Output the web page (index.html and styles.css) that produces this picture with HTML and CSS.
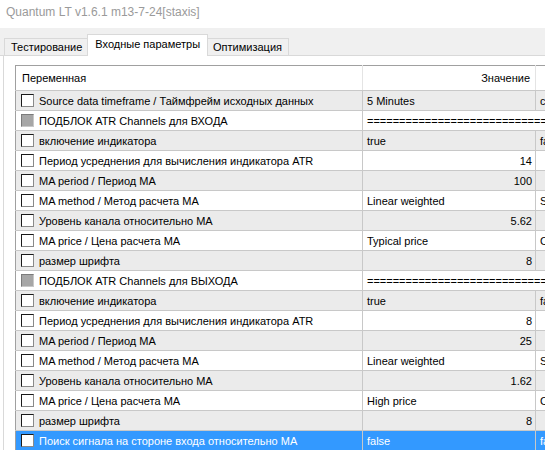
FILE: index.html
```html
<!DOCTYPE html>
<html lang="ru">
<head>
    <meta charset="UTF-8">
    <title>Quantum LT v1.6.1 m13-7-24[staxis]</title>
    <link rel="stylesheet" href="styles.css">
</head>
<body>
    <div class="title">Quantum LT v1.6.1 m13-7-24[staxis]</div>
    <div class="tabbar">
        <div class="tab">Тестирование</div>
        <div class="tab active">Входные параметры</div>
        <div class="tab">Оптимизация</div>
    </div>
    <div class="panel">
        <table class="grid">
            <colgroup>
                <col class="col-name">
                <col class="col-value">
                <col class="col-extra">
            </colgroup>
            <tr class="head">
                <th class="name">Переменная</th>
                <th class="value">Значение</th>
                <th></th>
            </tr>
            <tr class="odd">
                <td><span class="check"></span>Source data timeframe / Таймфрейм исходных данных</td>
                <td>5 Minutes</td>
                <td>current</td>
            </tr>
            <tr class="even block">
                <td><span class="check gray"></span>ПОДБЛОК ATR Channels для ВХОДА</td>
                <td colspan="2">=============================</td>
            </tr>
            <tr class="odd">
                <td><span class="check"></span>включение индикатора</td>
                <td>true</td>
                <td>false</td>
            </tr>
            <tr class="even">
                <td><span class="check"></span>Период усреднения для вычисления индикатора ATR</td>
                <td class="num">14</td>
                <td class="num">14</td>
            </tr>
            <tr class="odd">
                <td><span class="check"></span>MA period / Период MA</td>
                <td class="num">100</td>
                <td class="num">100</td>
            </tr>
            <tr class="even">
                <td><span class="check"></span>MA method / Метод расчета MA</td>
                <td>Linear weighted</td>
                <td>Simple</td>
            </tr>
            <tr class="odd">
                <td><span class="check"></span>Уровень канала относительно MA</td>
                <td class="num">5.62</td>
                <td class="num">5.62</td>
            </tr>
            <tr class="even">
                <td><span class="check"></span>MA price / Цена расчета MA</td>
                <td>Typical price</td>
                <td>Close price</td>
            </tr>
            <tr class="odd">
                <td><span class="check"></span>размер шрифта</td>
                <td class="num">8</td>
                <td class="num">8</td>
            </tr>
            <tr class="even block">
                <td><span class="check gray"></span>ПОДБЛОК ATR Channels для ВЫХОДА</td>
                <td colspan="2">=============================</td>
            </tr>
            <tr class="odd">
                <td><span class="check"></span>включение индикатора</td>
                <td>true</td>
                <td>false</td>
            </tr>
            <tr class="even">
                <td><span class="check"></span>Период усреднения для вычисления индикатора ATR</td>
                <td class="num">8</td>
                <td class="num">8</td>
            </tr>
            <tr class="odd">
                <td><span class="check"></span>MA period / Период MA</td>
                <td class="num">25</td>
                <td class="num">25</td>
            </tr>
            <tr class="even">
                <td><span class="check"></span>MA method / Метод расчета MA</td>
                <td>Linear weighted</td>
                <td>Simple</td>
            </tr>
            <tr class="odd">
                <td><span class="check"></span>Уровень канала относительно MA</td>
                <td class="num">1.62</td>
                <td class="num">1.62</td>
            </tr>
            <tr class="even">
                <td><span class="check"></span>MA price / Цена расчета MA</td>
                <td>High price</td>
                <td>Close price</td>
            </tr>
            <tr class="odd">
                <td><span class="check"></span>размер шрифта</td>
                <td class="num">8</td>
                <td class="num">8</td>
            </tr>
            <tr class="selected">
                <td><span class="check"></span>Поиск сигнала на стороне входа относительно MA</td>
                <td>false</td>
                <td>false</td>
            </tr>
        </table>
    </div>
</body>
</html>
```

FILE: styles.css
```css
html, body {
    margin: 0;
    padding: 0;
    width: 545px;
    height: 450px;
    overflow: hidden;
    background-color: #ffffff;
}
.title {
    height: 28px;
    line-height: 25px;
    padding-left: 6px;
    font-family: "Liberation Sans", Arial, sans-serif;
    font-size: 12px;
    color: #9a9a9a;
    white-space: nowrap;
}
.tabbar {
    background-color: #f0f0f0;
    height: 28px;
    padding-left: 4px;
    display: flex;
    align-items: flex-end;
    border-bottom: 1px solid #d9d9d9;
    box-sizing: border-box;
}
.tab {
    font-family: "Liberation Sans", Arial, sans-serif;
    font-size: 11px;
    color: #000000;
    height: 16px;
    line-height: 17px;
    padding: 0 6px;
    border: 1px solid #d9d9d9;
    border-bottom: none;
    background-color: #f0f0f0;
    white-space: nowrap;
}
.tab.active {
    background-color: #ffffff;
    height: 21px;
    line-height: 18px;
    padding: 0 7px;
    margin: 0 -2px -1px -2px;
    position: relative;
    z-index: 1;
}
.panel {
    margin-left: 3px;
    border-left: 1px solid #d9d9d9;
    padding: 9px 0 0 11px;
    background-color: #ffffff;
}
.grid {
    border-collapse: collapse;
    table-layout: fixed;
    width: 622px;
    border-top: 1px solid #a0a0a0;
    border-left: 1px solid #a0a0a0;
    font-family: "Liberation Sans", Arial, sans-serif;
    font-size: 11px;
    color: #000000;
}
.col-name {
    width: 347px;
}
.col-value {
    width: 173px;
}
.col-extra {
    width: 102px;
}
.grid th {
    height: 24px;
    font-weight: normal;
    text-align: left;
    padding: 0 6px;
    border-right: 1px solid #e4e4e4;
    border-bottom: 1px solid #c8c8c8;
    background-color: #ffffff;
}
.grid th.value {
    text-align: right;
    padding-right: 5px;
}
.grid td {
    height: 19px;
    padding: 0 4px;
    border-right: 1px solid #c8c8c8;
    border-bottom: 1px solid #c8c8c8;
    white-space: nowrap;
    overflow: hidden;
}
.grid td:first-child {
    padding-left: 5px;
}
.grid td.num {
    text-align: right;
    padding-right: 3px;
}
.odd td {
    background-color: #ebebeb;
}
.even td {
    background-color: #ffffff;
}
.selected td {
    background-color: #3399ff;
    color: #ffffff;
}
.check {
    display: inline-block;
    width: 11px;
    height: 11px;
    vertical-align: -2px;
    margin-right: 5px;
    background-color: #ffffff;
    border-top: 1px solid #1a1a1a;
    border-left: 1px solid #1a1a1a;
    border-right: 1px solid #8a8a8a;
    border-bottom: 1px solid #8a8a8a;
}
.check.gray {
    background-color: #a6a6a6;
    border-color: #7a7a7a #c8c8c8 #c8c8c8 #7a7a7a;
}
```
